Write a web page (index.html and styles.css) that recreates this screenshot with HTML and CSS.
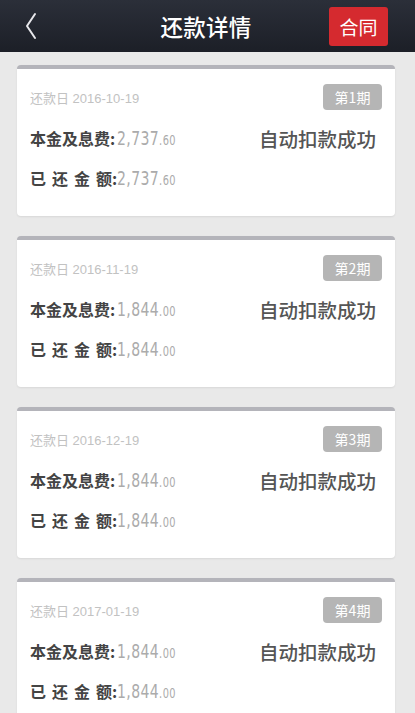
FILE: index.html
```html
<!DOCTYPE html>
<html lang="zh">
<head>
<meta charset="utf-8">
<title>还款详情</title>
<link rel="stylesheet" href="styles.css">
</head>
<body>
<header class="topbar">
  <div class="back">
    <svg width="14" height="28" viewBox="0 0 14 28"><path d="M11 2 L3 14 L11 26" fill="none" stroke="#e8e8ec" stroke-width="2" stroke-linecap="round" stroke-linejoin="round"/></svg>
  </div>
  <h1 class="title">还款详情</h1>
  <div class="right"><div class="contract">合同</div></div>
</header>
<main class="list">
  <section class="card">
    <div class="card-head"><span class="date">还款日 2016-10-19</span><span class="badge">第1期</span></div>
    <div class="row"><span class="label">本金及息费:</span><span class="num">2,737<small>.60</small></span><span class="status">自动扣款成功</span></div>
    <div class="row"><span class="label"><span class="sp">已还金</span>额:</span><span class="num">2,737<small>.60</small></span></div>
  </section>
  <section class="card">
    <div class="card-head"><span class="date">还款日 2016-11-19</span><span class="badge">第2期</span></div>
    <div class="row"><span class="label">本金及息费:</span><span class="num">1,844<small>.00</small></span><span class="status">自动扣款成功</span></div>
    <div class="row"><span class="label"><span class="sp">已还金</span>额:</span><span class="num">1,844<small>.00</small></span></div>
  </section>
  <section class="card">
    <div class="card-head"><span class="date">还款日 2016-12-19</span><span class="badge">第3期</span></div>
    <div class="row"><span class="label">本金及息费:</span><span class="num">1,844<small>.00</small></span><span class="status">自动扣款成功</span></div>
    <div class="row"><span class="label"><span class="sp">已还金</span>额:</span><span class="num">1,844<small>.00</small></span></div>
  </section>
  <section class="card">
    <div class="card-head"><span class="date">还款日 2017-01-19</span><span class="badge">第4期</span></div>
    <div class="row"><span class="label">本金及息费:</span><span class="num">1,844<small>.00</small></span><span class="status">自动扣款成功</span></div>
    <div class="row"><span class="label"><span class="sp">已还金</span>额:</span><span class="num">1,844<small>.00</small></span></div>
  </section>
</main>
</body>
</html>
```
FILE: styles.css
```css
* { box-sizing: border-box; }
html, body { margin: 0; padding: 0; }
body {
  width: 415px;
  height: 713px;
  overflow: hidden;
  background: #e9e9e9;
  font-family: "Noto Sans CJK SC", "Noto Sans", sans-serif;
}
.topbar {
  height: 52px;
  background: linear-gradient(180deg, #2b2f39 0%, #1c1f27 100%);
  display: grid;
  grid-template-columns: 1fr auto 1fr;
  align-items: center;
  padding: 0 27px 0 24px;
}
.back { width: 14px; height: 28px; display: flex; }
.title {
  margin: 0;
  text-align: center;
  color: #fff;
  font-size: 22.5px;
  font-weight: 500;
  letter-spacing: 0.3px;
}
.right { display: flex; justify-content: flex-end; }
.contract {
  width: 59px;
  height: 39px;
  background: #d52a2f;
  border-radius: 3px;
  color: #fff;
  font-size: 19px;
  display: flex;
  align-items: center;
  justify-content: center;
}
.list {
  padding: 13px 20px 0 17px;
  display: flex;
  flex-direction: column;
  gap: 20px;
}
.card {
  height: 151px;
  background: #fff;
  border-top: 4px solid #b4b4ba;
  border-radius: 4px;
  box-shadow: 0 1px 2px rgba(0,0,0,0.08);
  padding: 15px 13px 0 13px;
}
.card-head {
  display: flex;
  justify-content: space-between;
  align-items: center;
  height: 26px;
  margin-bottom: 8px;
}
.date {
  font-family: "Liberation Sans", "Noto Sans CJK SC", sans-serif;
  color: #c2c2c2;
  font-size: 13px;
}
.badge {
  width: 59px;
  height: 26px;
  background: #b5b5b5;
  border-radius: 4px;
  color: #fff;
  font-size: 14px;
  display: flex;
  align-items: center;
  justify-content: center;
}
.row {
  height: 40px;
  display: flex;
  align-items: center;
}
.label {
  color: #444;
  font-size: 16px;
  font-weight: 700;
  width: 87px;
  white-space: nowrap;
}
.label .sp { letter-spacing: 6px; }
.num {
  font-family: "DejaVu Sans Condensed", "Liberation Sans", sans-serif;
  font-size: 20px;
  color: #ababab;
  display: inline-block;
  transform: scaleX(0.78);
  transform-origin: left center;
  letter-spacing: 0.5px;
  white-space: nowrap;
}
.num small { font-size: 14px; }
.status {
  margin-left: auto;
  margin-right: 6px;
  color: #555;
  font-size: 19.5px;
  font-weight: 500;
}
```
